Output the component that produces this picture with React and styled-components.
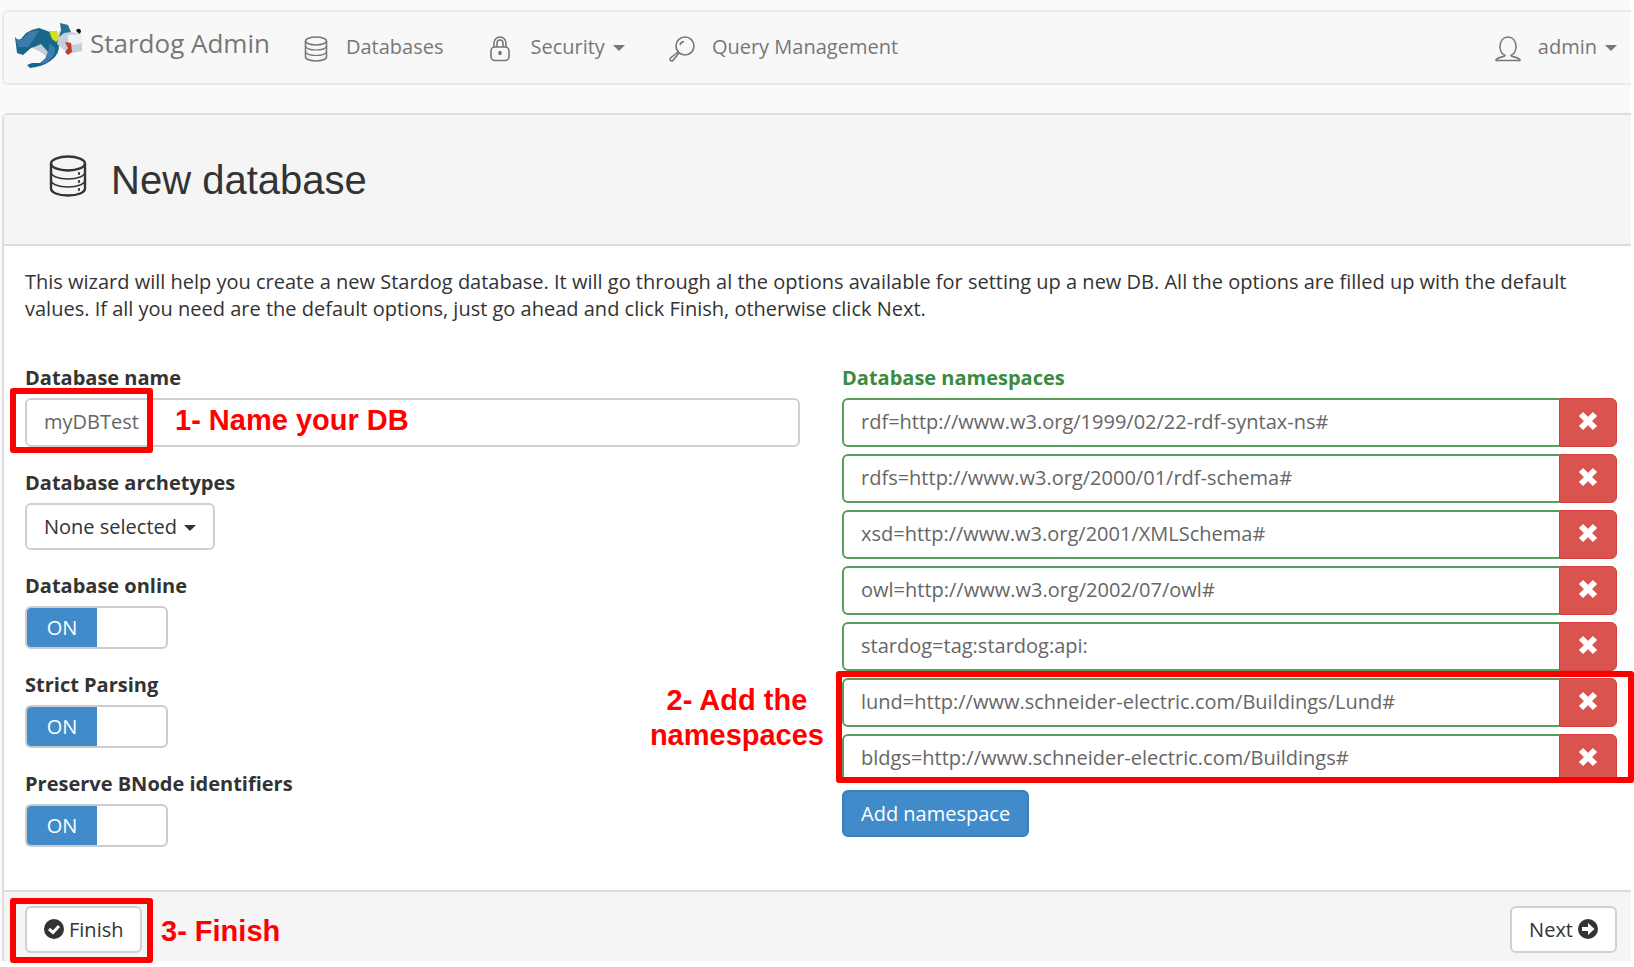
import React from "react";
import styled, { createGlobalStyle, css } from "styled-components";

const Global = createGlobalStyle`
  *, *::before, *::after { box-sizing: border-box; }
  html { background: #fff; }
  body {
    margin: 0;
    color: #333;
    font-family: "Open Sans", sans-serif;
    font-size: 20px;
    line-height: 27px;
  }
  button, input { font: inherit; }
`;

const Page = styled.div`
  margin: 0 3px 6px 0;
  padding: 10px 0 0 2px;
  background: #fafafa;
`;

const Navbar = styled.header`
  display: flex;
  align-items: flex-start;
  height: 75px;
  padding: 0 14px 0 10px;
  background: #f8f8f8;
  border: 2px solid #eaeaea;
  border-right: 0;
  border-radius: 6px 0 0 6px;
`;

const Brand = styled.a`
  display: flex;
  align-items: center;
  gap: 8px;
  height: 62px;
  color: #777;
  font-size: 26px;
  text-decoration: none;
`;

const Nav = styled.nav`
  display: flex;
  flex: 1;
  gap: 43px;
  padding-left: 32px;
`;

const NavLink = styled.a`
  display: flex;
  align-items: center;
  height: 69px;
  color: #777;
  text-decoration: none;
  ${(p) => p.$end && css`margin-left: auto;`}
`;

const NavIcon = styled.svg`
  width: 28px;
  height: 28px;
  margin: 5px 16px 0 0;
  fill: none;
  stroke: currentColor;
  stroke-width: 1.6;
`;

const Caret = styled.span`
  margin: 2px 0 0 ${(p) => (p.$tight ? 2 : 8)}px;
  border-top: 6px solid;
  border-left: 6px solid transparent;
  border-right: 6px solid transparent;
`;

const Panel = styled.form`
  margin-top: 28px;
  background: #fff;
  border: 2px solid #ddd;
  border-width: 2px 0 0 2px;
  border-radius: 6px 0 0 0;
`;

const PanelHeader = styled.div`
  display: flex;
  align-items: center;
  gap: 23px;
  height: 131px;
  padding-left: 44px;
  background: #f5f5f5;
  border-bottom: 2px solid #ddd;
`;

const HeaderIcon = styled.svg`
  width: 40px;
  height: 42px;
  margin-bottom: 7px;
  fill: none;
  stroke: currentColor;
  stroke-width: 2.4;
`;

const Title = styled.h1`
  margin: 0;
  font: 400 40px/48px "Liberation Sans", sans-serif;
`;

const PanelBody = styled.div`
  padding: 22px 14px 21px 21px;
`;

const Intro = styled.p`
  margin: 0 0 42px;
`;

const Columns = styled.div`
  display: grid;
  grid-template-columns: 1fr 1fr;
  gap: 42px;
`;

const Field = styled.div`
  margin-bottom: 22px;
`;

const labelText = css`
  display: block;
  margin-bottom: 7px;
  font-weight: 700;
`;

const Label = styled.label`
  ${labelText}
`;

const NamespacesLabel = styled.div`
  ${labelText}
  color: #3c8a3e;
`;

const Anchor = styled.div`
  position: relative;
`;

const TextInput = styled.input`
  display: block;
  flex: 1;
  width: 100%;
  min-width: 0;
  height: 49px;
  padding: 0 17px 2px;
  color: #666;
  background: #fff;
  border: 2px solid #d0d0d0;
  border-radius: 6px;
  outline: 0;
  ${(p) => p.$valid && css`
    border-color: #5a9e5c;
    border-right: 0;
    border-radius: 6px 0 0 6px;
  `}
`;

const Button = styled.button`
  display: inline-flex;
  align-items: center;
  gap: 5px;
  height: 47px;
  padding: 0 17px;
  color: #333;
  background: #fff;
  border: 2px solid #d0d0d0;
  border-radius: 6px;
  ${(p) => p.$primary && css`
    color: #fff;
    background: #428bca;
    border-color: #3a80c0;
  `}
`;

const ButtonIcon = styled.svg`
  width: 20px;
  height: 20px;
  margin-bottom: 2px;
`;

const Toggle = styled.label`
  display: block;
  width: 143px;
  height: 43px;
  overflow: hidden;
  background: #fff;
  border: 2px solid #ccc;
  border-radius: 6px;
`;

const ToggleInput = styled.input`
  position: absolute;
  opacity: 0;
`;

const ToggleOn = styled.span`
  display: flex;
  align-items: center;
  justify-content: center;
  width: 70px;
  height: 100%;
  color: #fff;
  font-weight: 500;
  background: #428bca;
`;

const NamespaceRow = styled.div`
  display: flex;
  margin-bottom: 7px;
`;

const RemoveButton = styled.button`
  display: flex;
  align-items: center;
  justify-content: center;
  width: 58px;
  height: 49px;
  padding: 0 0 4px;
  color: #fff;
  background: #d9534f;
  border: 1px solid #d43f3a;
  border-radius: 0 6px 6px 0;
`;

const PanelFooter = styled.div`
  display: flex;
  align-items: center;
  justify-content: space-between;
  height: 71px;
  padding: 6px 14px 0 21px;
  padding-bottom: 0;
  background: #f5f5f5;
  border-top: 2px solid #ddd;
`;

const Outline = styled.div`
  position: absolute;
  border: 6px solid #f00;
  border-radius: 3px;
  pointer-events: none;
  ${(p) => p.$wide
    ? css`inset: -7px -17px 7px -6px;`
    : css`top: ${p.$top}px; left: -15px; width: 143px; height: 65px;`}
`;

const OutlinedRows = styled(Anchor)`
  display: flow-root;
  & > ${Outline} { bottom: 7px; }
`;

const Note = styled.div`
  position: absolute;
  color: #f00;
  font: 700 29px/35px "Liberation Sans", sans-serif;
  text-align: center;
  white-space: nowrap;
  ${(p) => p.$place}
`;

const noteName = css`top: 5px; left: 150px;`;
const noteNamespaces = css`top: 5px; right: calc(100% + 18px);`;
const noteFinish = css`top: 8px; left: 136px;`;

function DogLogo() {
  return (
    <svg width="68" height="56" viewBox="0 -7 68 56" aria-hidden="true">
      <path fill="#16678a" d="M1 15 4 18 7 17 12 11Q18 7 25 6L36 10 44 18Q47 28 41 35 33 43 22 45L16 46 13 43 18 41 26 41 32 36 33 29 26 24 17 26 9 33 3 31Z" />
      <path fill="#3b7cab" d="M2 17 8 18 15 10 25 8 20 17 14 25 4 25ZM35 21 41 26Q42 34 32 41L27 42Q36 32 35 21Z" />
      <path fill="#c2cfd8" d="M18 26 27 22 34 30 32 34 25 29Z" />
      <path fill="#d3e01c" d="M35 9 43 9 46 16 42 20 38 17Z" />
      <path fill="#c3d0d8" d="M45 10 50 6 57 10 67 12 68 21 68 29 59 31 50 28 43 22Z" />
      <path fill="#eef1f4" d="M54 13 67 12 68 21 59 23 54 20Z" />
      <path fill="#2a7293" d="M46 1 54 3 57 10 50 11 45 15 47 8Z" />
      <path fill="#151515" d="M62 8Q66 5 67 9L66 12 63 10Z" />
      <path fill="#c03c2b" d="M51 20 57 21 58 30 54 33 51 30 54 26Z" />
    </svg>
  );
}

const toggles = ["Database online", "Strict Parsing", "Preserve BNode identifiers"];

const defaults = [
  "rdf=http://www.w3.org/1999/02/22-rdf-syntax-ns#",
  "rdfs=http://www.w3.org/2000/01/rdf-schema#",
  "xsd=http://www.w3.org/2001/XMLSchema#",
  "owl=http://www.w3.org/2002/07/owl#",
  "stardog=tag:stardog:api:",
];

const added = [
  "lund=http://www.schneider-electric.com/Buildings/Lund#",
  "bldgs=http://www.schneider-electric.com/Buildings#",
];

function Namespace({ value }) {
  return (
    <NamespaceRow>
      <TextInput $valid defaultValue={value} aria-label="Namespace" />
      <RemoveButton type="button" aria-label="Remove namespace">
        <svg width="20" height="20" viewBox="0 0 20 20" aria-hidden="true">
          <path d="M3 3 17 17M17 3 3 17" stroke="currentColor" strokeWidth="6" />
        </svg>
      </RemoveButton>
    </NamespaceRow>
  );
}

export default function App() {
  return (
    <Page>
      <Global />
      <Navbar>
        <Brand href="#"><DogLogo />Stardog Admin</Brand>
        <Nav>
          <NavLink href="#databases">
            <NavIcon viewBox="0 0 28 28">
              <ellipse cx="14" cy="6" rx="10.5" ry="4" />
              <path d="M3.500 6v16c0 2.300 4.700 4 10.500 4s10.500-1.700 10.500-4V6" />
              <path strokeWidth="1.200" d="M3.500 11c0 2.300 4.700 4 10.500 4s10.500-1.700 10.500-4M3.500 16.500c0 2.300 4.700 4 10.500 4s10.500-1.700 10.500-4M20 14.500h2M20 19.500h2" />
            </NavIcon>
            Databases
          </NavLink>
          <NavLink href="#security">
            <NavIcon viewBox="0 0 28 28">
              <rect x="5" y="12" width="18" height="13.500" rx="4" />
              <path d="M8 12V8a6 6 0 0 1 12 0v4M11 12V8a3 3 0 0 1 6 0v4" />
              <ellipse cx="14" cy="18" rx="1" ry="1.500" fill="currentColor" />
            </NavIcon>
            Security<Caret />
          </NavLink>
          <NavLink href="#queries">
            <NavIcon viewBox="0 0 28 28">
              <circle cx="17" cy="11" r="9" />
              <path d="M11 18 5 25.500Q3.500 26.500 2.500 25.500T2.500 23L10 17M12 10Q12.500 7 16 6.500" />
            </NavIcon>
            Query Management
          </NavLink>
          <NavLink href="#account" $end>
            <NavIcon viewBox="0 0 28 28">
              <path d="M11 20.500C3 17 5 2 14 2s11 15 3 18.500c0 1.500 9 1.500 9 5H2c0-3.500 9-3.500 9-5Z" />
            </NavIcon>
            admin<Caret />
          </NavLink>
        </Nav>
      </Navbar>

      <Panel>
        <PanelHeader>
          <HeaderIcon viewBox="0 0 40 42">
            <ellipse cx="20" cy="8.500" rx="17" ry="7" />
            <path d="M3 8.500v25C3 37.500 10 40.500 20 40.500s17-3 17-7v-25" />
            <path strokeWidth="1.500" d="M3 17c0 4 7 7 17 7s17-3 17-7M3 25c0 4 7 7 17 7s17-3 17-7" />
            <path d="M30 18.500h2M30 26.500h2M30 34.500h2" />
          </HeaderIcon>
          <Title>New database</Title>
        </PanelHeader>

        <PanelBody>
          <Intro>
            This wizard will help you create a new Stardog database. It will go through al the options available for
            setting up a new DB. All the options are filled up with the default values. If all you need are the default
            options, just go ahead and click Finish, otherwise click Next.
          </Intro>
          <Columns>
            <div>
              <Field>
                <Label htmlFor="db-name">Database name</Label>
                <Anchor>
                  <TextInput id="db-name" defaultValue="myDBTest" />
                  <Outline $top={-10} />
                  <Note $place={noteName}>1- Name your DB</Note>
                </Anchor>
              </Field>
              <Field>
                <Label htmlFor="archetypes">Database archetypes</Label>
                <Button id="archetypes" type="button">None selected<Caret $tight /></Button>
              </Field>
              {toggles.map((name, i) => (
                <Field key={name}>
                  <Label htmlFor={`toggle-${i}`}>{name}</Label>
                  <Toggle>
                    <ToggleInput id={`toggle-${i}`} type="checkbox" defaultChecked />
                    <ToggleOn>ON</ToggleOn>
                  </Toggle>
                </Field>
              ))}
            </div>
            <div>
              <NamespacesLabel>Database namespaces</NamespacesLabel>
              {defaults.map((value) => <Namespace key={value} value={value} />)}
              <OutlinedRows>
                {added.map((value) => <Namespace key={value} value={value} />)}
                <Outline $wide />
                <Note $place={noteNamespaces}>2- Add the<br />namespaces</Note>
              </OutlinedRows>
              <Button type="button" $primary>Add namespace</Button>
            </div>
          </Columns>
        </PanelBody>

        <PanelFooter>
          <Anchor>
            <Button type="submit">
              <ButtonIcon viewBox="0 0 20 20">
                <circle cx="10" cy="10" r="10" fill="#333" />
                <path d="M5 10 9 13.500 15 7" fill="none" stroke="#fff" strokeWidth="3" />
              </ButtonIcon>
              Finish
            </Button>
            <Outline $top={-8} />
            <Note $place={noteFinish}>3- Finish</Note>
          </Anchor>
          <Button type="button">
            Next
            <ButtonIcon viewBox="0 0 20 20">
              <circle cx="10" cy="10" r="10" fill="#333" />
              <path d="M4 8H10V4L16.500 10 10 16V12H4Z" fill="#fff" />
            </ButtonIcon>
          </Button>
        </PanelFooter>
      </Panel>
    </Page>
  );
}
